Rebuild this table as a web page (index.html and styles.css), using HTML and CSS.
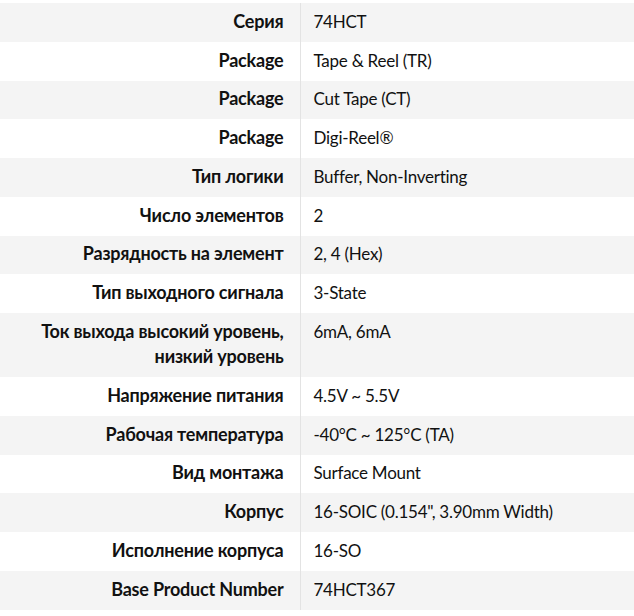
FILE: index.html
```html
<!DOCTYPE html>
<html lang="ru">
<head>
<meta charset="utf-8">
<link rel="stylesheet" href="styles.css">
</head>
<body>
<table class="spec">
  <tbody>
    <tr><th>Серия</th><td>74HCT</td></tr>
    <tr><th>Package</th><td>Tape &amp; Reel (TR)</td></tr>
    <tr><th>Package</th><td>Cut Tape (CT)</td></tr>
    <tr><th>Package</th><td>Digi-Reel®</td></tr>
    <tr><th>Тип логики</th><td>Buffer, Non-Inverting</td></tr>
    <tr><th>Число элементов</th><td>2</td></tr>
    <tr><th>Разрядность на элемент</th><td>2, 4 (Hex)</td></tr>
    <tr><th>Тип выходного сигнала</th><td>3-State</td></tr>
    <tr><th>Ток выхода высокий уровень,<br>низкий уровень</th><td>6mA, 6mA</td></tr>
    <tr><th>Напряжение питания</th><td>4.5V ~ 5.5V</td></tr>
    <tr><th>Рабочая температура</th><td>-40°C ~ 125°C (TA)</td></tr>
    <tr><th>Вид монтажа</th><td>Surface Mount</td></tr>
    <tr><th>Корпус</th><td>16-SOIC (0.154", 3.90mm Width)</td></tr>
    <tr><th>Исполнение корпуса</th><td>16-SO</td></tr>
    <tr><th>Base Product Number</th><td>74HCT367</td></tr>
  </tbody>
</table>
</body>
</html>
```

FILE: styles.css
```css
html, body {
  margin: 0;
  padding: 0;
  background: #ffffff;
}
body {
  padding-top: 3px;
  font-family: Lato, "Open Sans", sans-serif;
  font-size: 18px;
  color: #111111;
}
.spec {
  width: 100%;
  border-collapse: collapse;
  border-spacing: 0;
}
.spec tr:nth-child(odd) {
  background: #f4f4f4;
}
.spec th,
.spec td {
  vertical-align: top;
  line-height: 25.25px;
  padding-top: 5.75px;
  padding-bottom: 7.75px;
}
.spec th {
  box-sizing: border-box;
  width: 300px;
  text-align: right;
  font-size: 18px;
  font-weight: 700;
  letter-spacing: -0.2px;
  padding-left: 8px;
  padding-right: 16px;
  white-space: nowrap;
}
.spec td {
  text-align: left;
  font-size: 17px;
  font-weight: 400;
  letter-spacing: -0.25px;
  border-left: 1px solid #e3e3e3;
  padding-left: 13px;
  padding-right: 8px;
}
```
